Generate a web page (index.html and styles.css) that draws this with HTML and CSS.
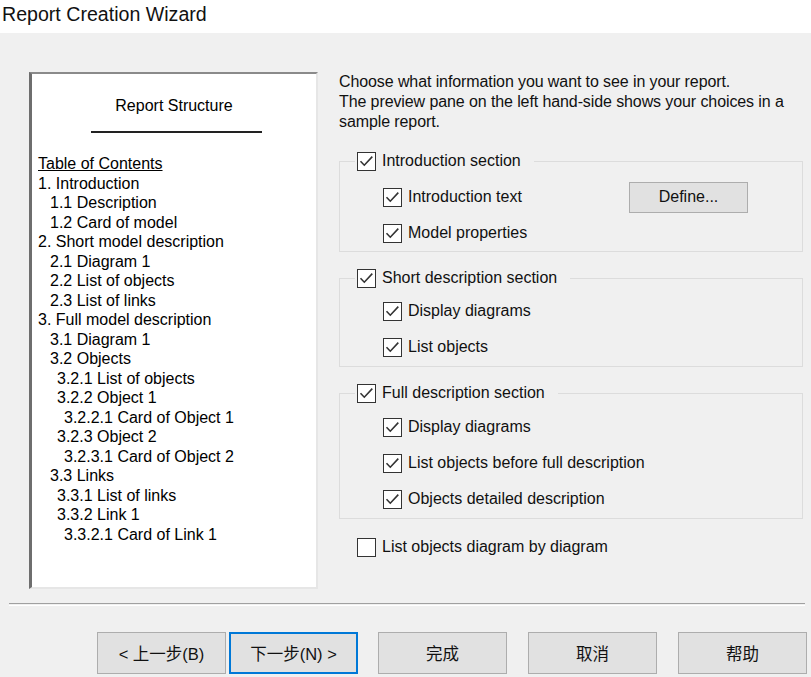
FILE: index.html
```html
<!DOCTYPE html>
<html>
<head>
<meta charset="utf-8">
<link rel="stylesheet" href="styles.css">
</head>
<body>
<div class="titlebar">Report Creation Wizard</div>
<div class="main">
  <div class="preview">
    <div class="pv-title">Report Structure</div>
    <div class="pv-rule"></div>
    <div class="toc">
      <div class="l0 u">Table of Contents</div>
      <div class="l0">1. Introduction</div>
      <div class="l1">1.1 Description</div>
      <div class="l1">1.2 Card of model</div>
      <div class="l0">2. Short model description</div>
      <div class="l1">2.1 Diagram 1</div>
      <div class="l1">2.2 List of objects</div>
      <div class="l1">2.3 List of links</div>
      <div class="l0">3. Full model description</div>
      <div class="l1">3.1 Diagram 1</div>
      <div class="l1">3.2 Objects</div>
      <div class="l2">3.2.1 List of objects</div>
      <div class="l2">3.2.2 Object 1</div>
      <div class="l3">3.2.2.1 Card of Object 1</div>
      <div class="l2">3.2.3 Object 2</div>
      <div class="l3">3.2.3.1 Card of Object 2</div>
      <div class="l1">3.3 Links</div>
      <div class="l2">3.3.1 List of links</div>
      <div class="l2">3.3.2 Link 1</div>
      <div class="l3">3.3.2.1 Card of Link 1</div>
    </div>
  </div>
  <div class="options">
    <div class="intro">
      <div>Choose what information you want to see in your report.</div>
      <div>The preview pane on the left hand-side shows your choices in a</div>
      <div>sample report.</div>
    </div>

    <fieldset class="group g1">
      <legend><span class="cb"><svg viewBox="0 0 19 19" width="19" height="19"><rect x="0.5" y="0.5" width="18" height="18" fill="#fff" stroke="#333"/><path d="M3.5 9.2 L7.3 13.2 L15.3 4.6" fill="none" stroke="#333" stroke-width="1.6"/></svg></span><span class="lbl">Introduction section</span></legend>
      <div class="row"><span class="cb"><svg viewBox="0 0 19 19" width="19" height="19"><rect x="0.5" y="0.5" width="18" height="18" fill="#fff" stroke="#333"/><path d="M3.5 9.2 L7.3 13.2 L15.3 4.6" fill="none" stroke="#333" stroke-width="1.6"/></svg></span><span class="lbl wide">Introduction text</span><button class="btn define">Define...</button></div>
      <div class="row"><span class="cb"><svg viewBox="0 0 19 19" width="19" height="19"><rect x="0.5" y="0.5" width="18" height="18" fill="#fff" stroke="#333"/><path d="M3.5 9.2 L7.3 13.2 L15.3 4.6" fill="none" stroke="#333" stroke-width="1.6"/></svg></span><span class="lbl">Model properties</span></div>
    </fieldset>

    <fieldset class="group g2">
      <legend><span class="cb"><svg viewBox="0 0 19 19" width="19" height="19"><rect x="0.5" y="0.5" width="18" height="18" fill="#fff" stroke="#333"/><path d="M3.5 9.2 L7.3 13.2 L15.3 4.6" fill="none" stroke="#333" stroke-width="1.6"/></svg></span><span class="lbl">Short description section</span></legend>
      <div class="row"><span class="cb"><svg viewBox="0 0 19 19" width="19" height="19"><rect x="0.5" y="0.5" width="18" height="18" fill="#fff" stroke="#333"/><path d="M3.5 9.2 L7.3 13.2 L15.3 4.6" fill="none" stroke="#333" stroke-width="1.6"/></svg></span><span class="lbl">Display diagrams</span></div>
      <div class="row"><span class="cb"><svg viewBox="0 0 19 19" width="19" height="19"><rect x="0.5" y="0.5" width="18" height="18" fill="#fff" stroke="#333"/><path d="M3.5 9.2 L7.3 13.2 L15.3 4.6" fill="none" stroke="#333" stroke-width="1.6"/></svg></span><span class="lbl">List objects</span></div>
    </fieldset>

    <fieldset class="group g3">
      <legend><span class="cb"><svg viewBox="0 0 19 19" width="19" height="19"><rect x="0.5" y="0.5" width="18" height="18" fill="#fff" stroke="#333"/><path d="M3.5 9.2 L7.3 13.2 L15.3 4.6" fill="none" stroke="#333" stroke-width="1.6"/></svg></span><span class="lbl">Full description section</span></legend>
      <div class="row"><span class="cb"><svg viewBox="0 0 19 19" width="19" height="19"><rect x="0.5" y="0.5" width="18" height="18" fill="#fff" stroke="#333"/><path d="M3.5 9.2 L7.3 13.2 L15.3 4.6" fill="none" stroke="#333" stroke-width="1.6"/></svg></span><span class="lbl">Display diagrams</span></div>
      <div class="row"><span class="cb"><svg viewBox="0 0 19 19" width="19" height="19"><rect x="0.5" y="0.5" width="18" height="18" fill="#fff" stroke="#333"/><path d="M3.5 9.2 L7.3 13.2 L15.3 4.6" fill="none" stroke="#333" stroke-width="1.6"/></svg></span><span class="lbl">List objects before full description</span></div>
      <div class="row"><span class="cb"><svg viewBox="0 0 19 19" width="19" height="19"><rect x="0.5" y="0.5" width="18" height="18" fill="#fff" stroke="#333"/><path d="M3.5 9.2 L7.3 13.2 L15.3 4.6" fill="none" stroke="#333" stroke-width="1.6"/></svg></span><span class="lbl">Objects detailed description</span></div>
    </fieldset>

    <div class="row single"><span class="cb"><svg viewBox="0 0 19 19" width="19" height="19"><rect x="0.5" y="0.5" width="18" height="18" fill="#fff" stroke="#333"/></svg></span><span class="lbl">List objects diagram by diagram</span></div>
  </div>
</div>
<div class="separator"></div>
<div class="buttons">
  <button class="btn nav">&lt; 上一步(B)</button>
  <button class="btn nav focused">下一步(N) &gt;</button>
  <button class="btn nav sp">完成</button>
  <button class="btn nav sp">取消</button>
  <button class="btn nav sp">帮助</button>
</div>
</body>
</html>
```

FILE: styles.css
```css
html, body {
  margin: 0;
  padding: 0;
}
body {
  width: 811px;
  height: 677px;
  overflow: hidden;
  background: #f0f0f0;
  font-family: "Liberation Sans", Arial, sans-serif;
  color: #000;
}
.titlebar {
  height: 33px;
  background: #fff;
  font-size: 19.6px;
  line-height: 29px;
  padding-left: 2px;
  color: #111;
}
.main {
  display: flex;
  padding: 39px 0 0 29px;
  height: 517px;
}
.preview {
  box-sizing: border-box;
  width: 289px;
  height: 517px;
  background: #fff;
  border-top: 2px solid #8a8a8a;
  border-left: 3px solid #6e6e6e;
  border-right: 2px solid #e6e6e6;
  border-bottom: 2px solid #e6e6e6;
  padding: 22px 0 0 6px;
}
.pv-title {
  text-align: center;
  font-size: 16px;
  line-height: 20px;
  margin-left: -6px;
}
.pv-rule {
  width: 171px;
  height: 0;
  border-top: 2px solid #222;
  margin: 15px 0 0 53px;
}
.toc {
  margin-top: 21px;
  font-size: 16px;
  line-height: 19.5px;
  white-space: nowrap;
}
.toc .u { text-decoration: underline; }
.l1 { padding-left: 12px; }
.l2 { padding-left: 19px; }
.l3 { padding-left: 26px; }

.options {
  width: 464px;
  margin-left: 21px;
  font-size: 16px;
}
.intro {
  line-height: 20px;
  white-space: nowrap;
  color: #111;
  letter-spacing: -0.1px;
}
.group {
  margin: 0;
  padding: 0;
  border: 1px solid #dcdcdc;
  min-width: 0;
}
.group legend {
  display: flex;
  align-items: center;
  height: 20px;
  padding: 0 13px 0 2px;
  margin-left: 15px;
}
.group .row {
  padding-left: 43px;
}
.g1 { margin-top: 19px; padding-top: 8px; }
.g2 { margin-top: 16px; padding-top: 5px; padding-bottom: 1px; }
.g3 { margin-top: 16px; padding-top: 6px; padding-bottom: 1px; }
.row {
  display: flex;
  align-items: center;
  height: 36px;
}
.cb {
  display: inline-flex;
  width: 19px;
  height: 19px;
  flex: none;
}
.lbl {
  margin-left: 6px;
  white-space: nowrap;
  color: #111;
}
.lbl.wide {
  width: 221px;
}
.btn {
  box-sizing: border-box;
  background: #e1e1e1;
  border: 1px solid #adadad;
  font-family: "Liberation Sans", "Noto Sans CJK SC", sans-serif;
  font-size: 16px;
  color: #111;
  padding: 0;
  margin: 0;
}
.define {
  width: 119px;
  height: 31px;
}
.row.single {
  height: 20px;
  margin: 18px 0 0 18px;
}
.separator {
  margin: 14px 6px 0 9px;
  height: 1px;
  border-top: 1px solid #a0a0a0;
  border-bottom: 1px solid #fff;
}
.buttons {
  display: flex;
  padding: 26px 0 0 97px;
}
.nav {
  width: 129px;
  height: 42px;
  font-size: 16.5px;
}
.nav.focused {
  border: 2px solid #0078d7;
  margin-left: 3px;
}
.nav.sp { margin-left: 20px; }
.nav.sp + .nav.sp { margin-left: 21px; }
```
